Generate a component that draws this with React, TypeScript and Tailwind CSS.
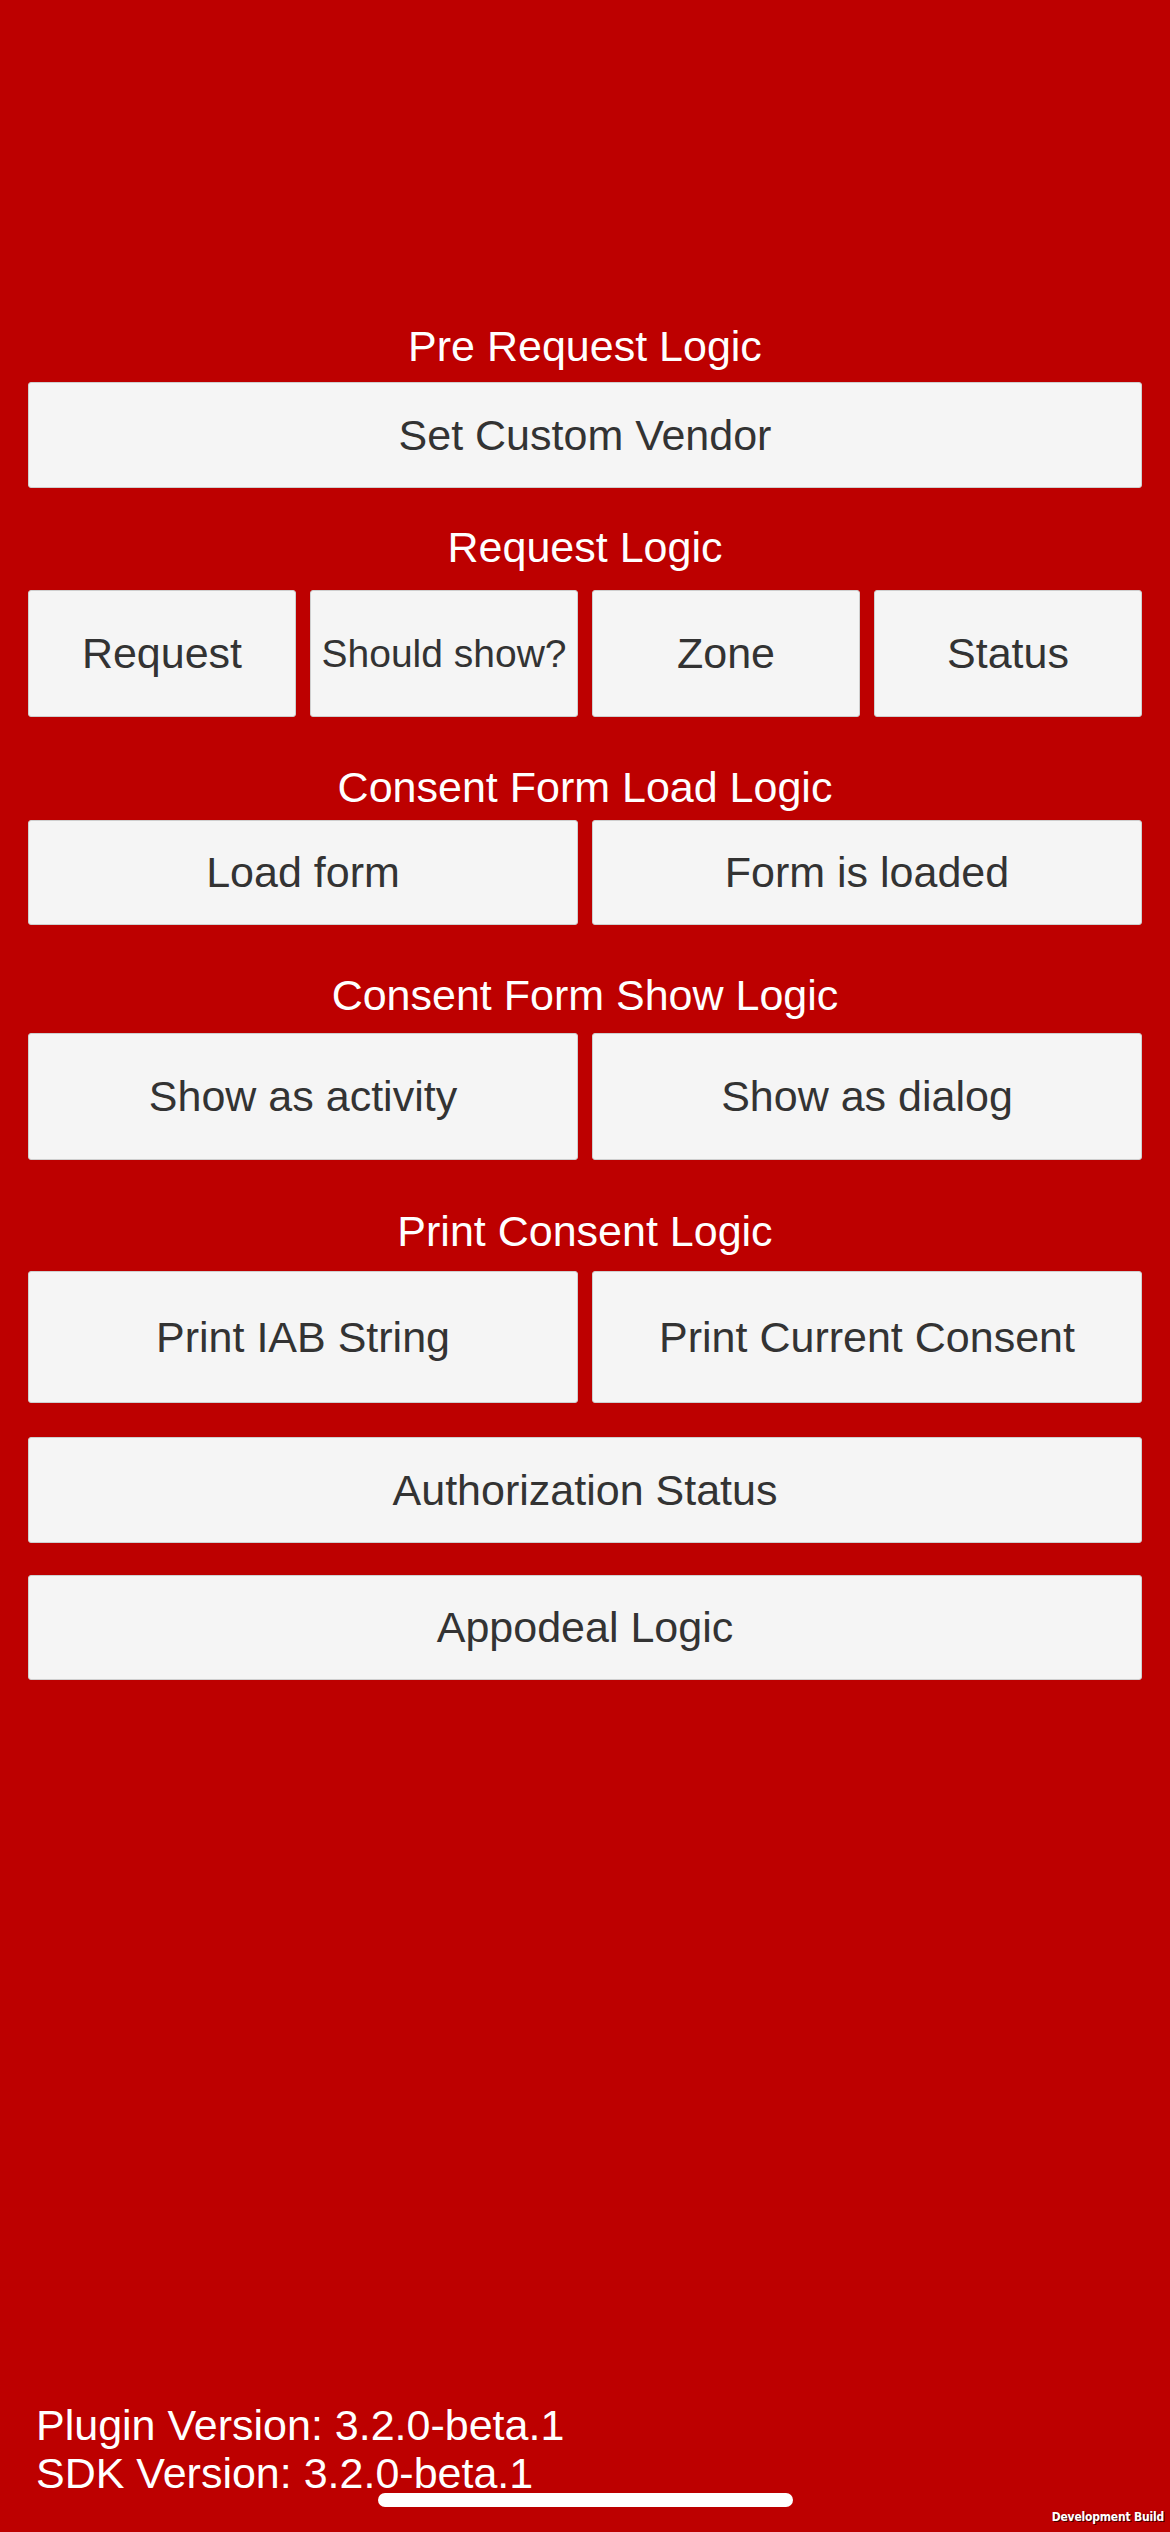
import React from "react";

const font = { fontFamily: '"Liberation Sans", Arial, sans-serif' };

const btnCls =
  "flex items-center justify-center rounded-[3px] border border-[#cfcfcf] bg-[#f5f5f5] text-[43px] leading-none text-[#333333]";

function Title({ children, className = "" }: { children: React.ReactNode; className?: string }) {
  return (
    <div className={"text-center text-[43px] leading-none text-white " + className}>
      {children}
    </div>
  );
}

export default function App() {
  return (
    <div
      className="relative flex h-[2532px] w-[1170px] flex-col overflow-hidden bg-[#bd0000]"
      style={font}
    >
      <div className="flex flex-col px-[28px] pt-[325px]">
        {/* Pre request */}
        <Title>Pre Request Logic</Title>
        <button className={btnCls + " mt-[14px] h-[106px]"}>Set Custom Vendor</button>

        {/* Request */}
        <Title className="mt-[38px]">Request Logic</Title>
        <div className="mt-[21px] grid grid-cols-4 gap-[14px]">
          <button className={btnCls + " h-[127px]"}>Request</button>
          <button className={btnCls + " h-[127px] !text-[39px]"}>Should show?</button>
          <button className={btnCls + " h-[127px]"}>Zone</button>
          <button className={btnCls + " h-[127px]"}>Status</button>
        </div>

        {/* Load */}
        <Title className="mt-[49px]">Consent Form Load Logic</Title>
        <div className="mt-[11px] grid grid-cols-2 gap-[14px]">
          <button className={btnCls + " h-[105px]"}>Load form</button>
          <button className={btnCls + " h-[105px]"}>Form is loaded</button>
        </div>

        {/* Show */}
        <Title className="mt-[49px]">Consent Form Show Logic</Title>
        <div className="mt-[16px] grid grid-cols-2 gap-[14px]">
          <button className={btnCls + " h-[127px]"}>Show as activity</button>
          <button className={btnCls + " h-[127px]"}>Show as dialog</button>
        </div>

        {/* Print */}
        <Title className="mt-[50px]">Print Consent Logic</Title>
        <div className="mt-[18px] grid grid-cols-2 gap-[14px]">
          <button className={btnCls + " h-[132px]"}>Print IAB String</button>
          <button className={btnCls + " h-[132px]"}>Print Current Consent</button>
        </div>

        <button className={btnCls + " mt-[34px] h-[106px]"}>Authorization Status</button>
        <button className={btnCls + " mt-[32px] h-[105px]"}>Appodeal Logic</button>
      </div>

      {/* versions */}
      <div className="mt-auto pb-[35px] pl-[36px] text-[43px] leading-[48px] text-white">
        <div>Plugin Version: 3.2.0-beta.1</div>
        <div>SDK Version: 3.2.0-beta.1</div>
      </div>

      {/* home indicator */}
      <div className="absolute bottom-[25px] left-[378px] h-[14px] w-[415px] rounded-full bg-white" />

      <div
        className="absolute bottom-[9px] right-[6px] text-[12px] font-bold leading-none tracking-[-0.2px] text-white [text-shadow:1px_1px_0_#400000]"
        style={{ fontFamily: '"DejaVu Sans Condensed", "Liberation Sans", sans-serif' }}
      >
        Development Build
      </div>
    </div>
  );
}
